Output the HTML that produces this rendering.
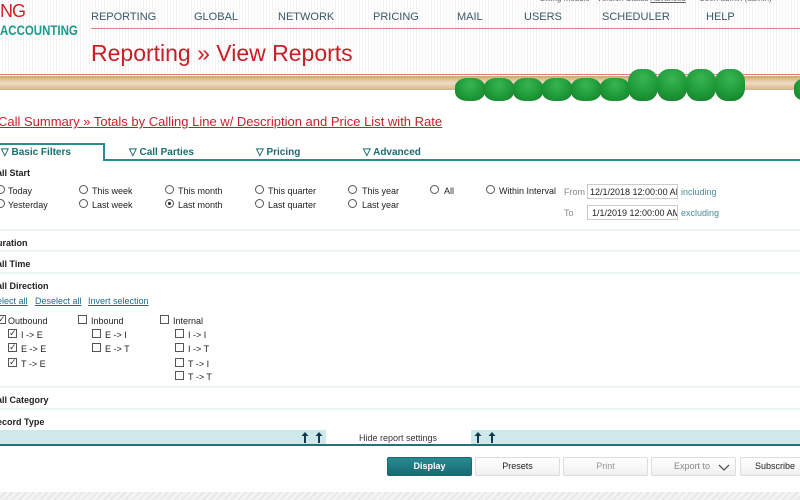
<!DOCTYPE html>
<html><head><meta charset="utf-8"><style>
*{margin:0;padding:0;box-sizing:border-box}
body{width:800px;height:500px;overflow:hidden;background:#fff;font-family:"Liberation Sans",sans-serif;position:relative;color:#222}
.a{position:absolute;white-space:nowrap}
.hdr{position:absolute;left:0;top:0;width:800px;height:78px;background:repeating-linear-gradient(90deg,#fff 0 2px,#f3f3f3 2px 3px)}
.nav{font-size:11px;color:#3a5666;top:11px}
.rod{position:absolute;left:0;top:76px;width:800px;height:14px;background:linear-gradient(#c9a77a,#f0dcc0 50%,#d4b690)}
.bead{position:absolute;width:30px;border-radius:40%;background:radial-gradient(circle at 50% 30%,#3ab554,#1f9a38 55%,#167a2a)}
.t{font-size:9px;color:#222}
.b{font-size:9px;font-weight:bold}
.sec{position:absolute;left:0;width:800px;border-top:2px solid #eef3f3}
.r{display:inline-block;width:9px;height:9px;border:1px solid #555;border-radius:50%;position:absolute}
.r.on::after{content:"";position:absolute;left:2px;top:2px;width:3px;height:3px;border-radius:50%;background:#222}
.c{position:absolute;width:9px;height:9px;border:1px solid #555;font-size:9px;line-height:7px;text-align:center;color:#333}
.tab{font-size:10px;font-weight:bold;color:#1d6b6e;top:147px}
.btn{position:absolute;top:457px;height:19px;border:1px solid #ddd;border-radius:2px;background:linear-gradient(#fff,#f0f0f0);font-size:9px;text-align:center;line-height:17px}
.arr{position:absolute;top:431px;width:10px;height:12px}
</style></head><body>
<div class="hdr"></div>
<div class="a" style="left:540px;top:-6px;font-size:8px;color:#666">Billing Module · Version Status <u>Advanced</u> &nbsp;&nbsp;&nbsp;&nbsp; User: admin (admin)</div>
<div class="a" style="left:0;top:1px;font-size:18px;color:#d0202a;letter-spacing:-1px">NG</div>
<div class="a" style="left:0;top:22px;font-size:14px;color:#1a9a8c;font-weight:bold;transform:scaleX(0.82);transform-origin:left">ACCOUNTING</div>
<div class="a nav" style="left:91px">REPORTING</div>
<div class="a nav" style="left:194px">GLOBAL</div>
<div class="a nav" style="left:278px">NETWORK</div>
<div class="a nav" style="left:373px">PRICING</div>
<div class="a nav" style="left:457px">MAIL</div>
<div class="a nav" style="left:524px">USERS</div>
<div class="a nav" style="left:602px">SCHEDULER</div>
<div class="a nav" style="left:706px">HELP</div>
<div class="a" style="left:91px;top:28px;width:709px;height:1px;background:#d6868a"></div>
<div class="a" style="left:91px;top:40px;font-size:23px;color:#c81e26">Reporting » View Reports</div>
<div class="a" style="left:0;top:74px;width:800px;height:1px;background:#e07a80"></div>
<div class="rod"></div>
<div class="bead" style="left:455px;top:78px;height:23px"></div>
<div class="bead" style="left:484px;top:78px;height:23px"></div>
<div class="bead" style="left:513px;top:78px;height:23px"></div>
<div class="bead" style="left:542px;top:78px;height:23px"></div>
<div class="bead" style="left:571px;top:78px;height:23px"></div>
<div class="bead" style="left:600px;top:78px;height:23px"></div>
<div class="bead" style="left:628px;top:69px;height:32px"></div>
<div class="bead" style="left:657px;top:69px;height:32px"></div>
<div class="bead" style="left:686px;top:69px;height:32px"></div>
<div class="bead" style="left:715px;top:69px;height:32px"></div>
<div class="bead" style="left:794px;top:78px;height:23px"></div>

<div class="a" style="left:-2px;top:114px;font-size:13px;color:#c81e26;text-decoration:underline">Call Summary » Totals by Calling Line w/ Description and Price List with Rate</div>

<div class="a" style="left:0;top:159px;width:800px;height:2px;background:#2a8a8c"></div>
<div class="a" style="left:-2px;top:143px;width:107px;height:18px;border:2px solid #2a8a8c;border-bottom:none;background:#fff"></div>
<div class="a tab" style="left:1px">▽ Basic Filters</div>
<div class="a tab" style="left:129px">▽ Call Parties</div>
<div class="a tab" style="left:256px">▽ Pricing</div>
<div class="a tab" style="left:363px">▽ Advanced</div>

<div class="a b" style="left:-3px;top:168px">all Start</div>
<span class="r" style="left:-4px;top:185px"></span><div class="a t" style="left:8px;top:186px">Today</div>
<span class="r" style="left:-4px;top:199px"></span><div class="a t" style="left:8px;top:200px">Yesterday</div>
<span class="r" style="left:79px;top:185px"></span><div class="a t" style="left:92px;top:186px">This week</div>
<span class="r" style="left:79px;top:199px"></span><div class="a t" style="left:92px;top:200px">Last week</div>
<span class="r" style="left:165px;top:185px"></span><div class="a t" style="left:178px;top:186px">This month</div>
<span class="r on" style="left:165px;top:199px"></span><div class="a t" style="left:178px;top:200px">Last month</div>
<span class="r" style="left:255px;top:185px"></span><div class="a t" style="left:268px;top:186px">This quarter</div>
<span class="r" style="left:255px;top:199px"></span><div class="a t" style="left:268px;top:200px">Last quarter</div>
<span class="r" style="left:348px;top:185px"></span><div class="a t" style="left:362px;top:186px">This year</div>
<span class="r" style="left:348px;top:199px"></span><div class="a t" style="left:362px;top:200px">Last year</div>
<span class="r" style="left:430px;top:185px"></span><div class="a t" style="left:444px;top:186px">All</div>
<span class="r" style="left:486px;top:185px"></span><div class="a t" style="left:499px;top:186px">Within Interval</div>
<div class="a t" style="left:564px;top:187px;color:#888">From</div>
<div class="a t" style="left:564px;top:208px;color:#888">To</div>
<div class="a t" style="left:587px;top:184px;width:91px;height:15px;border:1px solid #ccc;padding:2px 0 0 2px;overflow:hidden">12/1/2018 12:00:00 AM</div>
<div class="a t" style="left:587px;top:205px;width:91px;height:15px;border:1px solid #ccc;padding:2px 0 0 4px;overflow:hidden">1/1/2019 12:00:00 AM</div>
<div class="a t" style="left:681px;top:187px;color:#4a8a9a">including</div>
<div class="a t" style="left:681px;top:208px;color:#4a8a9a">excluding</div>

<div class="sec" style="top:229px"></div>
<div class="a b" style="left:-3px;top:238px">uration</div>
<div class="sec" style="top:250px"></div>
<div class="a b" style="left:-3px;top:259px">all Time</div>
<div class="sec" style="top:272px"></div>
<div class="a b" style="left:-3px;top:281px">all Direction</div>
<div class="a t" style="left:-3px;top:296px;color:#1d6b8e;text-decoration:underline">elect all</div>
<div class="a t" style="left:35px;top:296px;color:#1d6b8e;text-decoration:underline">Deselect all</div>
<div class="a t" style="left:88px;top:296px;color:#1d6b8e;text-decoration:underline">Invert selection</div>
<span class="c" style="left:-3px;top:315px">✓</span><div class="a t" style="left:8px;top:316px">Outbound</div>
<span class="c" style="left:8px;top:329px">✓</span><div class="a t" style="left:21px;top:330px">I -&gt; E</div>
<span class="c" style="left:8px;top:343px">✓</span><div class="a t" style="left:21px;top:344px">E -&gt; E</div>
<span class="c" style="left:8px;top:358px">✓</span><div class="a t" style="left:21px;top:359px">T -&gt; E</div>
<span class="c" style="left:78px;top:315px"></span><div class="a t" style="left:91px;top:316px">Inbound</div>
<span class="c" style="left:92px;top:329px"></span><div class="a t" style="left:105px;top:330px">E -&gt; I</div>
<span class="c" style="left:92px;top:343px"></span><div class="a t" style="left:105px;top:344px">E -&gt; T</div>
<span class="c" style="left:160px;top:315px"></span><div class="a t" style="left:173px;top:316px">Internal</div>
<span class="c" style="left:175px;top:329px"></span><div class="a t" style="left:188px;top:330px">I -&gt; I</div>
<span class="c" style="left:175px;top:343px"></span><div class="a t" style="left:188px;top:344px">I -&gt; T</div>
<span class="c" style="left:175px;top:358px"></span><div class="a t" style="left:188px;top:359px">T -&gt; I</div>
<span class="c" style="left:175px;top:371px"></span><div class="a t" style="left:188px;top:372px">T -&gt; T</div>
<div class="sec" style="top:386px"></div>
<div class="a b" style="left:-3px;top:395px">all Category</div>
<div class="sec" style="top:408px"></div>
<div class="a b" style="left:-3px;top:417px">ecord Type</div>

<div class="a" style="left:0;top:430px;width:326px;height:14px;background:#cde9ec"></div>
<div class="a" style="left:471px;top:430px;width:329px;height:14px;background:#cde9ec"></div>
<div class="a" style="left:0;top:444px;width:800px;height:2px;background:#2a6e78"></div>
<svg class="arr" style="left:300px" viewBox="0 0 10 12"><path d="M5 1 L1.5 5 H4 V12 H6 V5 H8.5 Z" fill="#123a4a"/></svg>
<svg class="arr" style="left:314px" viewBox="0 0 10 12"><path d="M5 1 L1.5 5 H4 V12 H6 V5 H8.5 Z" fill="#123a4a"/></svg>
<svg class="arr" style="left:473px" viewBox="0 0 10 12"><path d="M5 1 L1.5 5 H4 V12 H6 V5 H8.5 Z" fill="#123a4a"/></svg>
<svg class="arr" style="left:487px" viewBox="0 0 10 12"><path d="M5 1 L1.5 5 H4 V12 H6 V5 H8.5 Z" fill="#123a4a"/></svg>
<div class="a t" style="left:359px;top:433px;color:#333">Hide report settings</div>

<div class="btn" style="left:387px;width:85px;background:linear-gradient(#2a8a92,#176a72);color:#fff;font-weight:bold;border-color:#176a72">Display</div>
<div class="btn" style="left:475px;width:85px">Presets</div>
<div class="btn" style="left:563px;width:85px;color:#999">Print</div>
<div class="btn" style="left:651px;width:85px;color:#888;text-align:left;padding-left:22px">Export to
<svg style="position:absolute;left:66px;top:6px" width="12" height="7" viewBox="0 0 12 7"><path d="M1 1 L6 6 L11 1" fill="none" stroke="#555" stroke-width="1.3"/></svg></div>
<div class="btn" style="left:740px;width:70px">Subscribe</div>
<div class="a" style="left:0;top:492px;width:800px;height:8px;background:repeating-linear-gradient(135deg,#f4f4f4 0 3px,#e8e8e8 3px 5px)"></div>
</body></html>
